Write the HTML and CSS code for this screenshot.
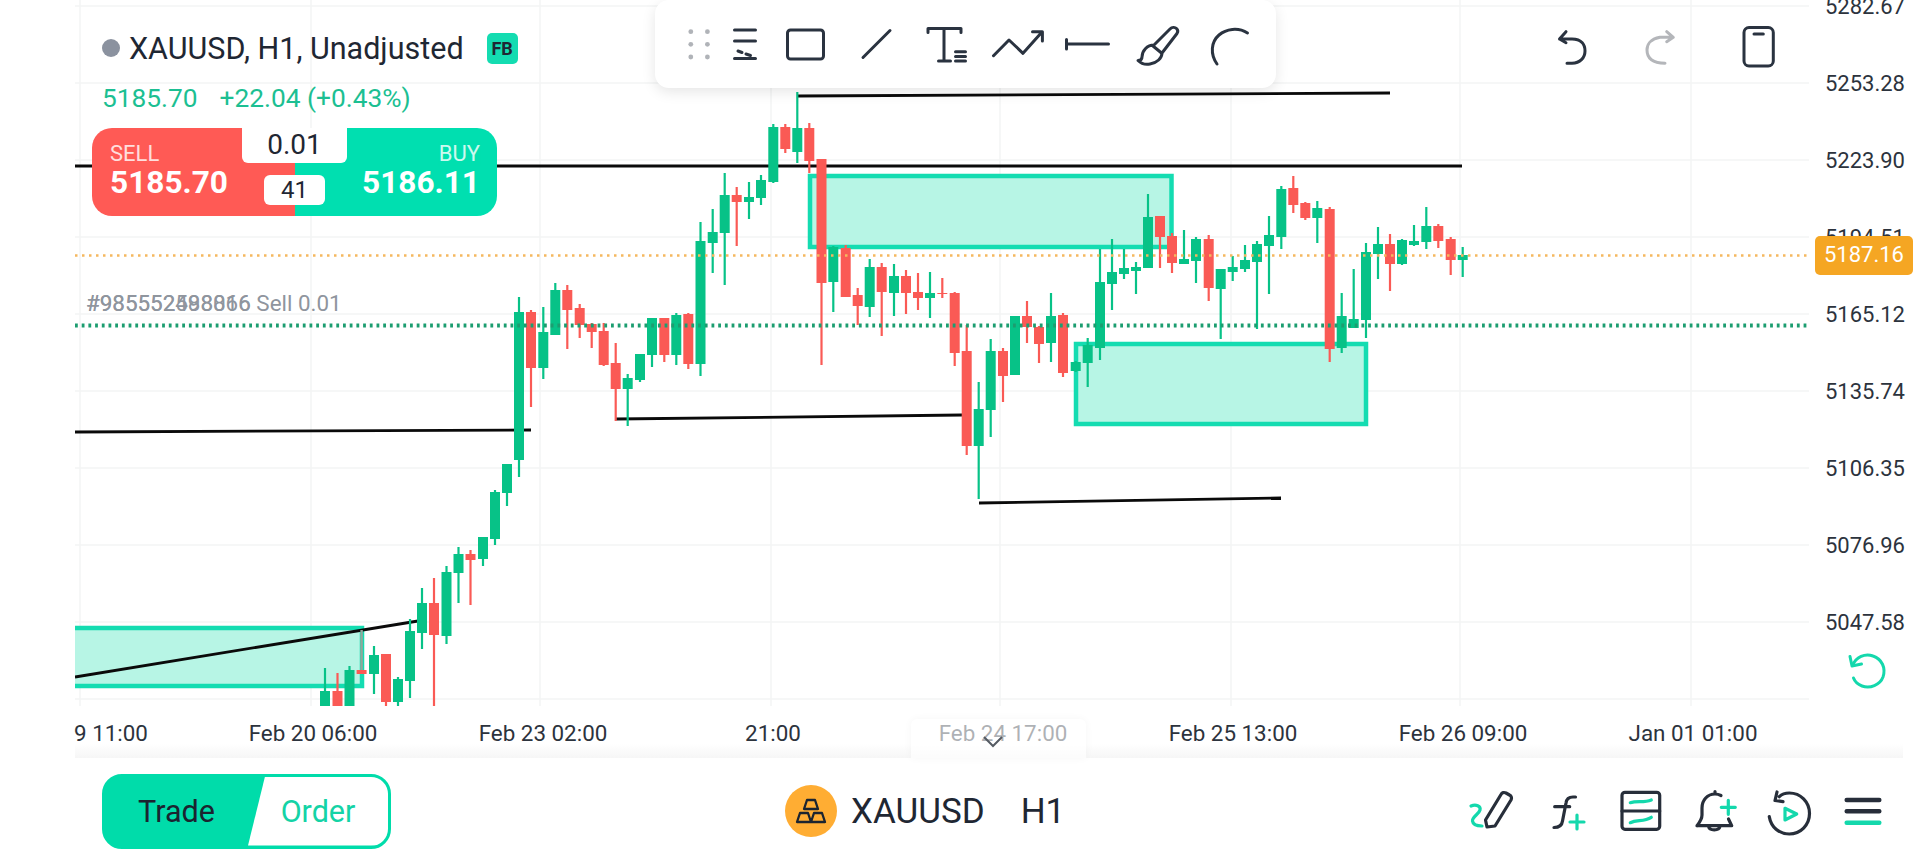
FILE: index.html
```html
<!DOCTYPE html>
<html>
<head>
  <title>XAUUSD H1 Chart</title>
  <link rel="stylesheet" href="styles.css">
</head>
<body>
  <div class="chart-row">
    <svg class="plot" width="1809" height="706" viewBox="0 0 1809 706">
      <defs>
        <clipPath id="plotClip"><rect x="75" y="0" width="1734" height="706"/></clipPath>
      </defs>
      <g class="grid">
        <line x1="75" y1="6" x2="1809" y2="6"/>
        <line x1="75" y1="83" x2="1809" y2="83"/>
        <line x1="75" y1="160" x2="1809" y2="160"/>
        <line x1="75" y1="237" x2="1809" y2="237"/>
        <line x1="75" y1="314" x2="1809" y2="314"/>
        <line x1="75" y1="391" x2="1809" y2="391"/>
        <line x1="75" y1="468" x2="1809" y2="468"/>
        <line x1="75" y1="545" x2="1809" y2="545"/>
        <line x1="75" y1="622" x2="1809" y2="622"/>
        <line x1="75" y1="699" x2="1809" y2="699"/>
        <line x1="80" y1="0" x2="80" y2="706"/>
        <line x1="311" y1="0" x2="311" y2="706"/>
        <line x1="540" y1="0" x2="540" y2="706"/>
        <line x1="771" y1="0" x2="771" y2="706"/>
        <line x1="1000" y1="0" x2="1000" y2="706"/>
        <line x1="1231" y1="0" x2="1231" y2="706"/>
        <line x1="1460" y1="0" x2="1460" y2="706"/>
        <line x1="1691" y1="0" x2="1691" y2="706"/>
      </g>
      <g clip-path="url(#plotClip)">
        <g class="zones">
          <rect x="810" y="176" width="361.5" height="71"/>
          <rect x="1076" y="344" width="290" height="80"/>
          <rect x="40" y="628" width="322" height="58"/>
        </g>
        <g class="trend-lines">
          <line x1="797" y1="96" x2="1390" y2="93"/>
          <line x1="75" y1="166" x2="1462" y2="166"/>
          <line x1="75" y1="432" x2="531" y2="430"/>
          <line x1="616" y1="419" x2="962" y2="415"/>
          <line x1="979" y1="503" x2="1281" y2="498"/>
          <line x1="75" y1="677" x2="418" y2="621"/>
        </g>
        <g id="candles"></g>
        <line class="blended-wick" x1="361.6" y1="630" x2="361.6" y2="670"/>
        <line class="level-ask" x1="75" y1="255.5" x2="1809" y2="255.5"/>
        <line class="level-order" x1="75" y1="325.5" x2="1809" y2="325.5"/>
      </g>
    </svg>

    <div class="price-axis">
      <span>5282.67</span>
      <span>5253.28</span>
      <span>5223.90</span>
      <span>5194.51</span>
      <span>5165.12</span>
      <span>5135.74</span>
      <span>5106.35</span>
      <span>5076.96</span>
      <span>5047.58</span>
    </div>
    <div class="price-tag">5187.16</div>

    <div class="legend">
      <div class="legend-title">
        <i class="status-dot"></i>
        <span>XAUUSD, H1, Unadjusted</span>
        <b class="badge">FB</b>
      </div>
      <div class="legend-quote">
        <span>5185.70</span>
        <span>+22.04 (+0.43%)</span>
      </div>
      <div class="trade-box">
        <div class="side side-sell">
          <span class="side-label">SELL</span>
          <strong class="side-price">5185.70</strong>
        </div>
        <div class="side side-buy">
          <span class="side-label">BUY</span>
          <strong class="side-price">5186.11</strong>
        </div>
        <div class="lot">0.01</div>
        <div class="spread">41</div>
      </div>
    </div>

    <div class="order-tag">
      <span>#985552498866 Sell 0.01</span>
      <span class="order-tag-under">#985552588016</span>
    </div>

    <div class="toolbar">
      <svg class="tool tool-narrow tool-dots" viewBox="0 0 28 48">
        <g class="dots">
          <circle cx="5.8" cy="11.7" r="2.4"/><circle cx="22.4" cy="11.7" r="2.4"/>
          <circle cx="5.8" cy="24.3" r="2.4"/><circle cx="22.4" cy="24.3" r="2.4"/>
          <circle cx="5.8" cy="37" r="2.4"/><circle cx="22.4" cy="37" r="2.4"/>
        </g>
      </svg>
      <svg class="tool tool-narrow" viewBox="0 0 28 48">
        <path d="M3.5 10H24.5M3.5 21H24.5M3.5 38.5H24.5M7 31L11 32.5M15 34L19.5 35.5"/>
      </svg>
      <svg class="tool" viewBox="0 0 48 48"><rect x="6.5" y="10" width="36" height="29" rx="3"/></svg>
      <svg class="tool" viewBox="0 0 48 48"><path d="M11 37.5L38 10.5"/></svg>
      <svg class="tool" viewBox="0 0 48 48">
        <path d="M6 12.5V8.5H39V12.5M22 8.5V41M16.5 41H28.5M33.5 31.7H43.5M33.5 36.5H43.5M33.5 41H43.5"/>
      </svg>
      <svg class="tool" viewBox="0 0 48 48"><path d="M.5 35.7L16 20L30 33.3L49 12M39.5 11.7H49.4V21"/></svg>
      <svg class="tool" viewBox="0 0 48 48"><path d="M3.5 19.5V29M3.5 24H45.5"/></svg>
      <svg class="tool" viewBox="0 0 48 48">
        <path d="M20 25L36 9C38 7 41 7 42.5 8.5C44 10 44 12 43 13.5L28 33M20 25C13 25 8 31 8 37C8 40 6 40.5 4 40.5C7 43.5 11 45 16 44C23 43 28 38 28 33M19 26L27.5 33"/>
      </svg>
      <svg class="tool" viewBox="0 0 48 48"><path d="M13 44C6 34 7 22 15 15C22 9 34 7 43.5 13"/></svg>
    </div>

    <div class="top-actions">
      <svg class="tool" viewBox="0 0 48 48">
        <path d="M18 11.7L11.5 19L18 22.7M11.5 19H24C34 19 37 25 37 31C37 38 32 43 24 43.3H19"/>
      </svg>
      <svg class="tool tool-muted" viewBox="0 0 48 48">
        <path d="M30.7 11.7L37.3 17.3L30.7 21.7M37 17.3H24C14 19 11 25 11 30C11 38 17 43 29 43.3"/>
      </svg>
      <svg class="tool tool-phone" viewBox="0 0 48 48">
        <rect x="9" y="7.5" width="29.3" height="38.5" rx="5"/>
        <path d="M19 14H28.3"/>
      </svg>
    </div>

    <svg class="reset-view" viewBox="0 0 40 40">
      <path d="M5.5 14.5C9 6 18 2 26 5C35 8 39 17 36 26C33 34 23 38 15 35C11 33.5 8 31 6.5 27"/>
      <path d="M3 5.5L5 15L14.5 13"/>
    </svg>
  </div>

  <div class="time-axis">
    <span class="time-first">9 11:00</span>
    <span>Feb 20 06:00</span>
    <span>Feb 23 02:00</span>
    <span>21:00</span>
    <span>Feb 24 17:00</span>
    <span>Feb 25 13:00</span>
    <span>Feb 26 09:00</span>
    <span>Jan 01 01:00</span>
    <div class="collapse-tab">
      <svg width="22" height="14" viewBox="0 0 22 14"><path d="M2 3L11 12L20 3"/></svg>
    </div>
  </div>

  <div class="footer">
    <div class="mode-switch">
      <div class="mode mode-trade">Trade</div>
      <div class="mode mode-order">Order</div>
    </div>
    <div class="symbol">
      <svg class="symbol-icon" viewBox="0 0 52 52">
        <circle cx="26" cy="26" r="26"/>
        <path d="M22 15H30L33 24H19ZM15 28H23L26 37H12ZM29 28H37L40 37H26Z"/>
      </svg>
      <span>XAUUSD</span>
      <span class="symbol-period">H1</span>
    </div>
    <div class="footer-icons">
      <svg class="nav-icon" viewBox="0 0 60 60">
        <path class="accent" d="M8 25C13 23 18 25 17 29C16 33 9 36 9.5 40C10 44 14 45 19 45"/>
        <path d="M24 46L22.5 39L38 13.5C39 11.5 41 11 43 12L46.5 14C48.5 15 49 17 48 19L32 45Z"/>
      </svg>
      <svg class="nav-icon" viewBox="0 0 60 60">
        <path d="M38.5 16H36C32 16 29.5 18 29 22L25.5 40C25 44 22 46.5 17 46.5M17.7 25.7H32.7"/>
        <path class="accent" d="M33 41H47M40 34V48"/>
      </svg>
      <svg class="nav-icon" viewBox="0 0 60 60">
        <rect x="11" y="11.3" width="37.7" height="37" rx="3"/>
        <path d="M11 30H48.7"/>
        <path class="accent" d="M19.3 21.7C26 19.5 33 22 40.3 19M19.3 41.7C26 38.5 33 41 40.3 36.3"/>
      </svg>
      <svg class="nav-icon" viewBox="0 0 60 60">
        <path d="M12 44.7H46.7L43.5 38M12 44.7C15 41 17 38 17 34V27C17 19 22.5 13 30 13C32 13 34 13.5 36 14.5M23.5 45.5C24.5 50 34 50 35 45.5M30 10.5V12.5"/>
        <path class="accent" d="M36.3 26.3H50.3M43.3 19.3V33.3"/>
      </svg>
      <svg class="nav-icon" viewBox="0 0 60 60">
        <path d="M10.3 35.7C12 46 20 53 30.3 53C41.5 53 50.5 44 50.5 32.5C50.5 21 41.5 12 30.3 12C26.5 12 23 13 20.3 15.7M18 11L16 19.5L24 20.7"/>
        <path class="accent" d="M26 27.3V39L37.7 33Z"/>
      </svg>
      <svg class="nav-icon nav-menu" viewBox="0 0 60 60">
        <path d="M13.7 19H46.3M13.7 30.3H46.3"/>
        <path class="accent" d="M13.7 41.7H46.3"/>
      </svg>
    </div>
  </div>

  <script src="chart.js"></script>
</body>
</html>
```

FILE: styles.css
```css
* { box-sizing: border-box; }
html, body { margin: 0; padding: 0; }
body {
  width: 1920px;
  height: 864px;
  overflow: hidden;
  background: #fff;
  font-family: Roboto, "Liberation Sans", sans-serif;
  color: #1f2733;
}

/* chart */
.chart-row {
  position: relative;
  display: flex;
  height: 706px;
  overflow: hidden;
}
.plot { display: block; flex: none; }
.grid line { stroke: #f3f4f5; stroke-width: 1.5; }
.zones rect { fill: #b7f5e5; stroke: #14dcb1; stroke-width: 4.5; }
.trend-lines line { stroke: #0a0a0a; stroke-width: 2.8; }
.wick { stroke-width: 2.2; }
.candle-up { fill: #07c287; stroke: #07c287; }
.candle-down { fill: #fa5a55; stroke: #fa5a55; }
.candle-up rect, .candle-down rect { stroke: none; }
.blended-wick { stroke: #8fa89c; stroke-width: 2.5; }
.level-ask { stroke: #f5b85f; stroke-width: 2.5; stroke-dasharray: 2.5 4.5; }
.level-order { stroke: #1c9d70; stroke-width: 4; stroke-dasharray: 2.8 3.9; }

.price-axis {
  display: flex;
  flex-direction: column;
  margin-top: -32px;
  padding-left: 16px;
  font-size: 22px;
  color: #2c333d;
}
.price-axis span {
  flex: none;
  height: 77px;
  line-height: 77px;
}
.price-tag {
  position: absolute;
  left: 1815px;
  top: 236px;
  width: 98px;
  height: 39px;
  line-height: 38px;
  text-align: center;
  font-size: 22px;
  color: #fff;
  background: #f5a623;
  border-radius: 5px;
}

/* legend and trade box */
.legend {
  position: absolute;
  left: 92px;
  top: 30px;
  width: 440px;
}
.legend-title {
  display: flex;
  align-items: center;
  height: 36px;
  padding-left: 10px;
  font-size: 30.5px;
  white-space: nowrap;
  color: #1f2733;
}
.status-dot {
  width: 18px;
  height: 18px;
  margin-right: 9px;
  border-radius: 50%;
  background: #8b929f;
}
.badge {
  width: 31px;
  height: 31px;
  margin-left: 23px;
  line-height: 32px;
  text-align: center;
  font-size: 18px;
  background: #14dcb1;
  border-radius: 5px;
}
.legend-quote {
  display: flex;
  gap: 22px;
  margin-top: 17px;
  padding-left: 10px;
  line-height: 30px;
  font-size: 26.3px;
  color: #1cbf92;
}
.trade-box {
  position: relative;
  display: flex;
  width: 405px;
  height: 88px;
  margin-top: 15px;
  border-radius: 20px;
  overflow: hidden;
}
.side {
  display: flex;
  flex: 1;
  flex-direction: column;
  padding: 13px 17px 0;
  color: #fff;
}
.side-sell { background: #ff5a55; padding-left: 18px; }
.side-buy { background: #00dfb0; align-items: flex-end; }
.side-label {
  line-height: 26px;
  font-size: 22px;
  opacity: .8;
}
.side-price {
  margin-top: 1px;
  line-height: 30px;
  font-size: 31.6px;
}
.lot {
  position: absolute;
  left: 150px;
  top: 0;
  width: 105px;
  height: 35px;
  line-height: 33px;
  text-align: center;
  font-size: 28px;
  background: #fff;
  border-radius: 0 0 6px 6px;
}
.spread {
  position: absolute;
  left: 172px;
  top: 47px;
  width: 61px;
  height: 30px;
  line-height: 31px;
  text-align: center;
  font-size: 24px;
  background: #fff;
  border-radius: 6px;
}
.order-tag {
  position: absolute;
  left: 86px;
  top: 290px;
  line-height: 26px;
  font-size: 22.4px;
  color: #8f959e;
  white-space: nowrap;
}
.order-tag-under {
  position: absolute;
  left: 0;
  top: 0;
}

/* drawing toolbar */
.toolbar {
  position: absolute;
  left: 655px;
  top: 0;
  display: flex;
  align-items: center;
  gap: 22.5px;
  width: 621px;
  height: 88px;
  padding-left: 30px;
  background: #fff;
  border-radius: 14px;
  box-shadow: 0 4px 14px rgba(0, 0, 0, .1);
}
.tool {
  flex: none;
  width: 48px;
  height: 48px;
  overflow: visible;
  fill: none;
  stroke: #2a3340;
  stroke-width: 3;
  stroke-linecap: round;
  stroke-linejoin: round;
}
.tool-narrow { width: 28px; }
.tool-dots { margin-right: -5px; }
.dots circle { fill: #b0b3b8; stroke: none; }
.tool-muted { stroke: #b4b6ba; }
.top-actions {
  position: absolute;
  left: 1548px;
  top: 20px;
  display: flex;
  gap: 40px;
}
.tool-phone { margin-left: 11px; }
.reset-view {
  position: absolute;
  left: 1847px;
  top: 651px;
  width: 40px;
  height: 40px;
  fill: none;
  stroke: #14d8ac;
  stroke-width: 3;
  stroke-linecap: round;
  stroke-linejoin: round;
}

/* time axis */
.time-axis {
  position: relative;
  display: grid;
  grid-template-columns: 123px repeat(7, 230px);
  align-items: center;
  height: 52px;
  margin: 0 17px 0 75px;
  padding-top: 2px;
  font-size: 22.4px;
  color: #2c333d;
  text-align: center;
  background: linear-gradient(to bottom, #fff 72%, #f6f6f6);
}
.time-first { text-align: left; margin-left: -1px; }
.collapse-tab {
  position: absolute;
  left: 836px;
  top: 13px;
  display: flex;
  justify-content: center;
  align-items: center;
  width: 175px;
  height: 39px;
  padding: 4px 12px 0 0;
  background: rgba(255, 255, 255, .62);
  border-radius: 6px 6px 0 0;
  box-shadow: 0 0 8px rgba(0, 0, 0, .04);
}
.collapse-tab svg {
  fill: none;
  stroke: #555b63;
  stroke-width: 2;
}

/* footer */
.footer {
  display: flex;
  align-items: center;
  height: 106px;
  padding: 0 27px 0 102px;
}
.mode-switch {
  display: flex;
  width: 289px;
  height: 75px;
  overflow: hidden;
  background: #00dcaa;
  border: 3px solid #00dcaa;
  border-radius: 20px;
  font-size: 30.5px;
  line-height: 69px;
  text-align: center;
}
.mode-trade { width: 143px; color: #1b2430; }
.mode-order {
  flex: 1;
  color: #14d3a6;
  background: #fff;
  clip-path: polygon(17px 0, 100% 0, 100% 100%, 0 100%);
}
.symbol {
  display: flex;
  align-items: center;
  margin-left: 394px;
  font-size: 35px;
  color: #1f2733;
}
.symbol-icon { width: 52px; height: 52px; margin-right: 14px; }
.symbol-icon circle { fill: #ffad33; }
.symbol-icon path { fill: none; stroke: #1b2430; stroke-width: 2.3; stroke-linejoin: round; }
.symbol-period { margin-left: 36px; }
.footer-icons {
  display: flex;
  gap: 14px;
  margin-left: auto;
}
.nav-icon {
  width: 60px;
  height: 60px;
  fill: none;
  stroke: #272e3a;
  stroke-width: 3.2;
  stroke-linecap: round;
  stroke-linejoin: round;
}
.nav-icon .accent { stroke: #14d8ac; }
.nav-menu { stroke-width: 4.5; }
```

FILE: chart.js
```js
// x, up/down, wick top, body top, body bottom, wick bottom
const candles = [
  [325, 1, 668, 691, 710, 710], [337.5, 0, 673, 691, 710, 710], [349.5, 1, 666, 670, 710, 710],
  [361.6, 0, 670, 670, 674, 674], [374, 1, 646, 655, 674, 694], [386, 0, 654, 654, 702, 706],
  [398, 1, 677, 679, 702, 706], [410, 1, 619, 631, 681, 698], [422, 1, 588, 603, 633, 649],
  [434, 0, 578, 603, 635, 710], [446.5, 1, 566, 572, 636, 644], [458.5, 1, 547, 554, 573, 603],
  [470.5, 0, 550, 554, 560, 605], [483, 1, 537, 537, 559, 566], [495, 1, 490, 492, 539, 545],
  [507, 1, 464, 464, 493, 506], [519, 1, 297, 312, 460, 477], [531, 0, 310, 312, 368, 407],
  [543.3, 1, 307, 332, 368, 379], [555.3, 1, 283, 290, 335, 335], [567.3, 0, 285, 290, 310, 349],
  [579.7, 0, 304, 308, 325, 338], [591.7, 0, 323, 324, 332, 348], [603.7, 0, 323, 331, 365, 366],
  [615.7, 0, 343, 363, 389, 421], [627.7, 1, 374, 378, 389, 426], [640, 1, 354, 354, 380, 382],
  [652, 1, 318, 318, 355, 367], [664.3, 0, 318, 318, 355, 362], [676.3, 1, 313, 315, 355, 365],
  [688.3, 0, 313, 314, 364, 369], [700.5, 1, 222, 241, 364, 376], [712.7, 1, 209, 232, 243, 273],
  [724.7, 1, 173, 195, 233, 285], [736.7, 0, 187, 195, 202, 246], [749, 1, 182, 197, 202, 219],
  [761, 1, 175, 180, 198, 205], [773.3, 1, 124, 127, 182, 183], [785.3, 0, 124, 127, 149, 153],
  [797.3, 1, 92, 128, 152, 163], [809.3, 0, 123, 128, 161, 173], [821.5, 0, 159, 159, 283, 365],
  [833.3, 1, 246, 247, 282, 312], [845.7, 0, 245, 248, 297, 297], [857.7, 0, 288, 295, 306, 325],
  [869.7, 1, 259, 267, 307, 317], [881.7, 0, 263, 267, 292, 336], [894, 1, 264, 276, 293, 316],
  [906, 0, 270, 276, 293, 314], [918, 0, 273, 292, 298, 310], [930, 1, 272, 293, 298, 318],
  [942.3, 0, 278, 293, 294, 298], [954.7, 0, 292, 293, 353, 366], [966.7, 0, 325, 351, 446, 455],
  [978.7, 1, 382, 409, 446, 499], [990.7, 1, 339, 351, 410, 437], [1003, 0, 348, 351, 376, 402],
  [1015, 1, 316, 316, 375, 375], [1027, 0, 301, 316, 327, 343], [1039, 0, 326, 327, 344, 363],
  [1051, 1, 293, 316, 343, 362], [1063, 0, 313, 315, 373, 377], [1075.7, 1, 361, 362, 371, 372],
  [1087.7, 1, 338, 345, 363, 387], [1100, 1, 249, 282, 348, 360], [1112, 1, 239, 272, 284, 310],
  [1124, 1, 249, 268, 274, 279], [1136, 1, 262, 267, 271, 294], [1148, 1, 194, 217, 268, 268],
  [1160, 0, 216, 216, 237, 268], [1172, 0, 233, 236, 263, 273], [1184, 1, 230, 259, 264, 264],
  [1196, 1, 237, 239, 261, 283], [1208.7, 0, 235, 239, 288, 301], [1220.7, 1, 269, 269, 289, 339],
  [1232.7, 1, 256, 267, 272, 281], [1245, 1, 245, 260, 269, 272], [1257, 1, 241, 244, 262, 329],
  [1269, 1, 216, 235, 246, 294], [1281.3, 1, 186, 189, 237, 249], [1293.3, 0, 176, 188, 205, 213],
  [1305.3, 0, 202, 203, 218, 220], [1317.3, 1, 201, 208, 218, 243], [1329.7, 0, 207, 209, 349, 362],
  [1341.7, 1, 293, 316, 348, 353], [1353.7, 1, 269, 319, 328, 328], [1366, 1, 243, 252, 320, 338],
  [1378, 1, 227, 244, 254, 279], [1390, 0, 234, 244, 264, 291], [1402, 1, 239, 240, 264, 265],
  [1414, 1, 225, 241, 245, 246], [1426.3, 1, 207, 226, 242, 249], [1438.3, 0, 224, 226, 241, 248],
  [1450.7, 0, 237, 239, 260, 275], [1462.7, 1, 247, 255, 260, 277]
];

const svgNs = 'http://www.w3.org/2000/svg';
const layer = document.getElementById('candles');

candles.forEach(function(c) {
  const group = document.createElementNS(svgNs, 'g');
  group.setAttribute('class', c[1] ? 'candle-up' : 'candle-down');

  const wick = document.createElementNS(svgNs, 'line');
  wick.setAttribute('class', 'wick');
  wick.setAttribute('x1', c[0]);
  wick.setAttribute('x2', c[0]);
  wick.setAttribute('y1', c[2]);
  wick.setAttribute('y2', c[5]);

  const body = document.createElementNS(svgNs, 'rect');
  body.setAttribute('x', c[0] - 5);
  body.setAttribute('y', c[3]);
  body.setAttribute('width', 10);
  body.setAttribute('height', c[4] - c[3]);

  group.appendChild(wick);
  group.appendChild(body);
  layer.appendChild(group);
});
```
